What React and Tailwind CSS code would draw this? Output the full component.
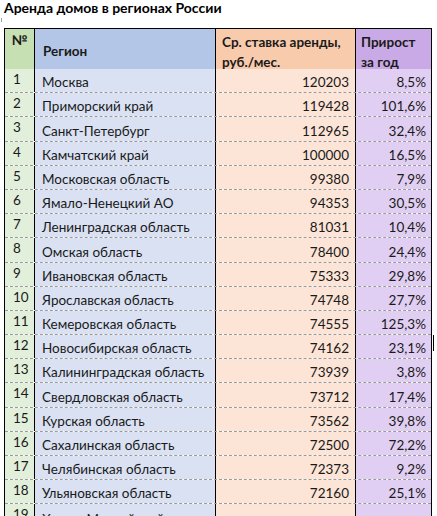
const rows = [
  ["1", "Москва", "120203", "8,5%"],
  ["2", "Приморский край", "119428", "101,6%"],
  ["3", "Санкт-Петербург", "112965", "32,4%"],
  ["4", "Камчатский край", "100000", "16,5%"],
  ["5", "Московская область", "99380", "7,9%"],
  ["6", "Ямало-Ненецкий АО", "94353", "30,5%"],
  ["7", "Ленинградская область", "81031", "10,4%"],
  ["8", "Омская область", "78400", "24,4%"],
  ["9", "Ивановская область", "75333", "29,8%"],
  ["10", "Ярославская область", "74748", "27,7%"],
  ["11", "Кемеровская область", "74555", "125,3%"],
  ["12", "Новосибирская область", "74162", "23,1%"],
  ["13", "Калининградская область", "73939", "3,8%"],
  ["14", "Свердловская область", "73712", "17,4%"],
  ["15", "Курская область", "73562", "39,8%"],
  ["16", "Сахалинская область", "72500", "72,2%"],
  ["17", "Челябинская область", "72373", "9,2%"],
  ["18", "Ульяновская область", "72160", "25,1%"],
  ["19", "Ханты-Мансийский", "", ""],
];

const cols = "grid grid-cols-[30px_181px_140px_75px]";

export default function App() {
  return (
    <div
      className="w-[437px] h-[516px] overflow-hidden bg-white text-[#1a1a1a] relative"
      style={{ fontFamily: "Lato, 'Open Sans', sans-serif" }}
    >
      <div className="pl-[4px] pt-[0px] h-[17px] text-[14px] leading-[15px] font-bold text-black">
        Аренда домов в регионах России
      </div>
      <div className="h-[10px] pl-0">
        <div className="w-[3px] h-[4px] border-l border-gray-400 ml-[1px] mt-[1px]" />
      </div>
      <div className="ml-[4px] w-[428px] border-[1.5px] border-black">
        <div className={`${cols} h-[40px] border-b-[1.5px] border-black text-[13.5px] font-bold`}>
          <div className="bg-[#c6e0b4] border-r border-black flex justify-center pt-[3px] leading-[16px]">№</div>
          <div className="bg-[#b4c6e7] border-r border-black flex items-center pl-[8px] pt-[1px]">Регион</div>
          <div className="bg-[#f8cbad] border-r border-black pl-[6px] pt-[3px] leading-[20px]">
            Ср. ставка аренды,
            <br />
            руб./мес.
          </div>
          <div className="bg-[#caaae6] pl-[5px] pt-[3px] leading-[20px]">
            Прирост
            <br />
            за год
          </div>
        </div>
        {rows.map((r, i) => (
          <div
            key={i}
            className={`${cols} h-[24.2px] text-[13.5px] ${
              i < rows.length - 1 ? "border-b border-dashed border-[#9a9a9a]" : ""
            }`}
          >
            <div className="bg-[#e2efda] border-r border-black pl-[8px] pt-[1px] leading-[18px]">{r[0]}</div>
            <div className="bg-[#d9e1f2] border-r border-black pl-[7px] flex items-end pb-[1px] leading-[18px] whitespace-nowrap">
              {r[1]}
            </div>
            <div className="bg-[#fce4d6] border-r border-black pr-[6px] flex items-end justify-end pb-[1px] leading-[18px]">
              {r[2]}
            </div>
            <div className="bg-[#e0cff2] pr-[5px] flex items-end justify-end pb-[1px] leading-[18px]">{r[3]}</div>
          </div>
        ))}
      </div>
      <div className="absolute left-[433px] top-[335px] w-[1px] h-[16px] bg-black" />
    </div>
  );
}
